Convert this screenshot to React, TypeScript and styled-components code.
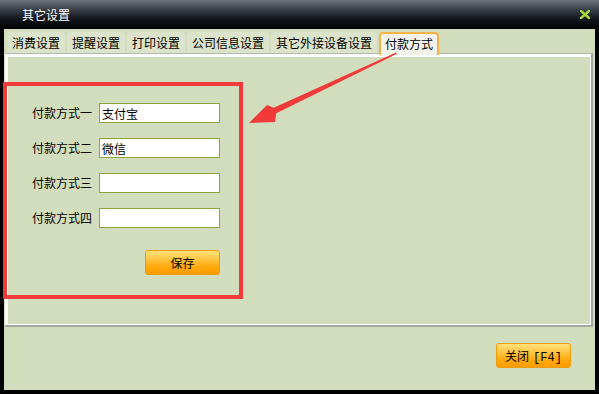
import { Fragment } from 'react';
import styled, { createGlobalStyle } from 'styled-components';

const GlobalStyle = createGlobalStyle`
  html, body {
    margin: 0;
    padding: 0;
    background: #000;
  }
  body {
    font-family: "Noto Sans CJK SC", "Liberation Sans", sans-serif;
    font-size: 12px;
  }
`;

const Window = styled.div`
  position: relative;
  width: 599px;
  height: 394px;
  background: #000;
  display: flex;
  flex-direction: column;
  overflow: hidden;
`;

const TitleBar = styled.div`
  height: 29px;
  flex: none;
  display: flex;
  align-items: center;
  justify-content: space-between;
  padding: 0 9px 0 22px;
  background: linear-gradient(#6c737b 0%, #363d45 35%, #12161b 65%, #000 100%);
  color: #fff;
  font-size: 12px;
`;

const CloseX = styled.svg`
  width: 10px;
  height: 9px;
  margin-top: -1px;
`;

const Body = styled.div`
  flex: 1;
  margin: 0 4px 4px 4px;
  background: #d1ddbd;
  display: flex;
  flex-direction: column;
`;

const TabBar = styled.div`
  height: 24px;
  flex: none;
  display: flex;
  align-items: flex-end;
  gap: 2px;
  padding-left: 3px;
  box-sizing: border-box;
  position: relative;
  z-index: 1;
`;

const Tab = styled.div<{ $active?: boolean }>`
  height: ${(p) => (p.$active ? '23px' : '21px')};
  margin-bottom: ${(p) => (p.$active ? '-2px' : '0')};
  box-sizing: border-box;
  padding: ${(p) => (p.$active ? '3px 4px 0' : '4px 5px 0')};
  background: ${(p) => (p.$active ? '#f3f3ea' : '#dbe4ca')};
  border: ${(p) => (p.$active ? '2px solid #f4b24a' : 'none')};
  border-bottom: none;
  border-radius: 4px 4px 0 0;
  line-height: 14px;
  color: #000;
  white-space: nowrap;
`;

const Panel = styled.div`
  height: 274px;
  flex: none;
  margin: 0 2px 0 1px;
  box-sizing: border-box;
  border-top: 1px solid #b4b8ae;
  border-right: 2px solid #a4a6a0;
  border-bottom: 2px solid #a4a6a0;
`;

const PanelInner = styled.div`
  height: 100%;
  box-sizing: border-box;
  border-style: solid;
  border-color: #fff;
  border-width: 3px 1px 1px 3px;
  background: #d1ddbd;
  padding: 46px 0 0 24px;
`;

const Form = styled.div`
  display: grid;
  grid-template-columns: 60px 121px;
  grid-auto-rows: 20px;
  column-gap: 7px;
  row-gap: 15px;
  align-items: center;
`;

const Label = styled.div`
  color: #000;
  white-space: nowrap;
  line-height: 14px;
`;

const Field = styled.input`
  width: 121px;
  height: 20px;
  box-sizing: border-box;
  border: 1px solid #8ca53e;
  background: #fff;
  padding: 0 2px;
  margin: 0;
  font-family: "Noto Sans CJK SC", "Liberation Sans", sans-serif;
  font-size: 12px;
  color: #000;
  outline: none;
`;

const ButtonRow = styled.div`
  grid-column: 2;
  align-self: start;
  display: flex;
  justify-content: flex-end;
  margin-top: 7px;
  height: 25px;
`;

const OrangeButton = styled.button`
  width: 75px;
  height: 25px;
  box-sizing: border-box;
  border: 1px solid #eb9c0c;
  border-radius: 3px;
  background: linear-gradient(#ffe27a 0%, #ffc23c 40%, #ffa80a 70%, #ff9d00 100%);
  font-family: "Noto Sans CJK SC", "Liberation Sans", sans-serif;
  font-size: 12px;
  color: #000;
  padding: 0;
  cursor: pointer;
`;

const Footer = styled.div`
  flex: 1;
  display: flex;
  justify-content: flex-end;
  align-items: flex-start;
  padding: 16px 24px 0 0;
`;

const KeyHint = styled.span`
  font-family: "Liberation Mono", monospace;
  font-size: 12px;
  margin-left: 4px;
`;

const Overlay = styled.svg`
  position: absolute;
  left: 0;
  top: 0;
  width: 599px;
  height: 394px;
  pointer-events: none;
  z-index: 5;
`;

const tabs = ['消费设置', '提醒设置', '打印设置', '公司信息设置', '其它外接设备设置', '付款方式'];

const payments = [
  { label: '付款方式一', value: '支付宝' },
  { label: '付款方式二', value: '微信' },
  { label: '付款方式三', value: '' },
  { label: '付款方式四', value: '' },
];

const App = () => {
  return (
    <>
      <GlobalStyle />
      <Window>
        <TitleBar>
          <span>其它设置</span>
          <CloseX viewBox="0 0 10 9">
            <path d="M1 1 L9 8 M9 1 L1 8" stroke="#a8d53a" strokeWidth="2.6" strokeLinecap="square" />
          </CloseX>
        </TitleBar>
        <Body>
          <TabBar>
            {tabs.map((t, i) => (
              <Tab key={t} $active={i === tabs.length - 1}>
                {t}
              </Tab>
            ))}
          </TabBar>
          <Panel>
            <PanelInner>
              <Form>
                {payments.map((p) => (
                  <Fragment key={p.label}>
                    <Label>{p.label}</Label>
                    <Field defaultValue={p.value} />
                  </Fragment>
                ))}
                <ButtonRow>
                  <OrangeButton>保存</OrangeButton>
                </ButtonRow>
              </Form>
            </PanelInner>
          </Panel>
          <Footer>
            <OrangeButton>
              关闭<KeyHint>[F4]</KeyHint>
            </OrangeButton>
          </Footer>
        </Body>
        {/* annotation: red box + arrow pointing at the tab */}
        <Overlay viewBox="0 0 599 394">
          <rect x="5" y="84" width="236" height="213" fill="none" stroke="#f13b3b" strokeWidth="4" />
          <polygon
            points="249,123 267,105 273.7,107.8 396,52.5 396.5,54 276.3,113.2 275,122"
            fill="#f13b3b"
          />
        </Overlay>
      </Window>
    </>
  );
};

export default App;
